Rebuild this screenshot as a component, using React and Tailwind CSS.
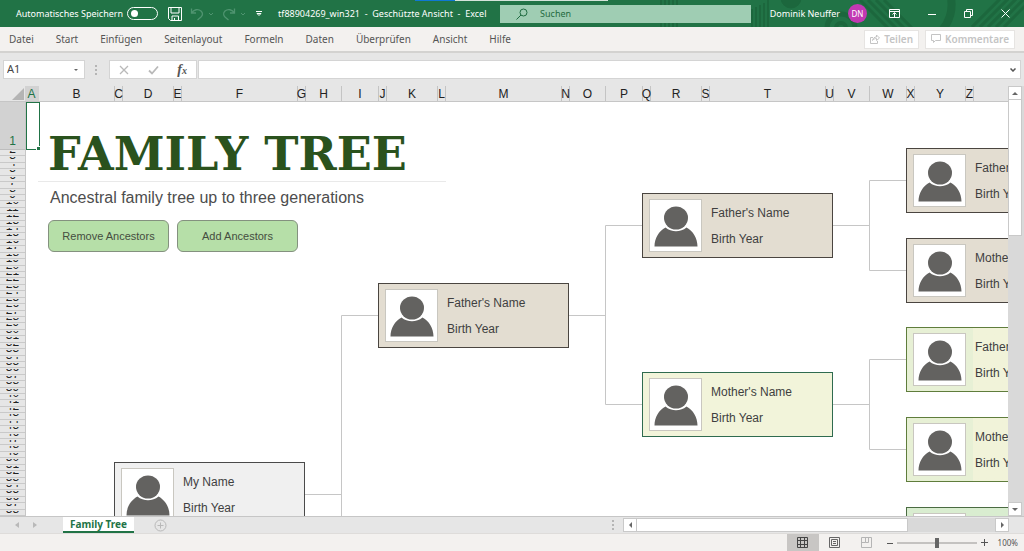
import React, { useState } from "react";

const columns = [
	{ name: "A", width: 14 },
	{ name: "B", width: 76 },
	{ name: "C", width: 8 },
	{ name: "D", width: 51 },
	{ name: "E", width: 8 },
	{ name: "F", width: 116 },
	{ name: "G", width: 8 },
	{ name: "H", width: 36 },
	{ name: "I", width: 37 },
	{ name: "J", width: 8 },
	{ name: "K", width: 51 },
	{ name: "L", width: 8 },
	{ name: "M", width: 116 },
	{ name: "N", width: 8 },
	{ name: "O", width: 36 },
	{ name: "P", width: 37 },
	{ name: "Q", width: 8 },
	{ name: "R", width: 51 },
	{ name: "S", width: 8 },
	{ name: "T", width: 116 },
	{ name: "U", width: 8 },
	{ name: "V", width: 36 },
	{ name: "W", width: 37 },
	{ name: "X", width: 8 },
	{ name: "Y", width: 51 },
	{ name: "Z", width: 8 },
];

// Zeilen 2 bis 58, Zeile 1 ist höher und wird extra gezeichnet
const rows = Array.from({ length: 57 }, (_, i) => i + 2);

const tabs = [
	"Datei",
	"Start",
	"Einfügen",
	"Seitenlayout",
	"Formeln",
	"Daten",
	"Überprüfen",
	"Ansicht",
	"Hilfe",
];

const people = [
	{ name: "My Name", x: 88, y: 360, color: "bg-[#f0f0f0] border-[#4a4a4a]" },
	{ name: "Father's Name", x: 352, y: 181, color: "bg-[#e3ddd1] border-[#4a4540]" },
	{ name: "Father's Name", x: 616, y: 91, color: "bg-[#e3ddd1] border-[#4a4540]" },
	{ name: "Mother's Name", x: 616, y: 270, color: "bg-[#f2f4da] border-[#2f6b4f]" },
	{ name: "Father's Name", x: 880, y: 46, color: "bg-[#e3ddd1] border-[#4a4540]" },
	{ name: "Mother's Name", x: 880, y: 136, color: "bg-[#e3ddd1] border-[#4a4540]" },
	{
		name: "Father's Name",
		x: 880,
		y: 225,
		color: "bg-linear-to-r from-[#e7f0d5] from-35% to-[#f1f3d9] to-35% border-[#5f7d3c]",
	},
	{
		name: "Mother's Name",
		x: 880,
		y: 315,
		color: "bg-linear-to-r from-[#e7f0d5] from-35% to-[#f1f3d9] to-35% border-[#5f7d3c]",
	},
	{ name: "Father's Name", x: 880, y: 405, color: "bg-[#d9edd0] border-[#4a6b41]" },
];

const Avatar = () => (
	<span className="flex size-[53px] shrink-0 items-center justify-center border border-[#c9c7c0] bg-white">
		<svg viewBox="0 0 44 44" className="size-11" fill="#636260">
			<ellipse cx="22" cy="14" rx="12" ry="11.500" />
			<path d="M.500 42.500C.500 34 5 27 11.500 23.500C17.500 28.500 26.500 28.500 32.500 23.500C39 27 43.500 34 43.500 42.500Z" />
		</svg>
	</span>
);

const PersonCard = ({ person }) => (
	<div
		className={`absolute flex w-[191px] gap-[9px] border px-1.5 py-[5px] text-xs text-[#3f3f3f] ${person.color}`}
		style={{ left: person.x, top: person.y }}
	>
		<Avatar />
		<div className="pt-px leading-[26px] whitespace-nowrap">
			<p>{person.name}</p>
			<p>Birth Year</p>
		</div>
	</div>
);

const Dots = () => (
	<span className="flex flex-col gap-0.5">
		<span className="size-0.5 bg-[#b5b5b5]" />
		<span className="size-0.5 bg-[#b5b5b5]" />
		<span className="size-0.5 bg-[#b5b5b5]" />
	</span>
);

const Chevron = ({ className }) => (
	<svg viewBox="0 0 6 4" className={className} fill="none" stroke="currentColor">
		<path d="M1 1L3 3L5 1" />
	</svg>
);

const TitlePattern = () => (
	<svg
		className="absolute top-0 right-0 h-[27px] w-[364px]"
		viewBox="0 0 364 27"
		fill="none"
		stroke="#1c673d"
	>
		<path strokeWidth="2" d="M1 0V27M5 0V27M9 0V27M13 0V27M17 0V27M92 9V27M96 7V27M100 5V27M104 3V27M108 0V27" />
		<circle cx="131" cy="-2" r="10" fill="#1c673d" />
		<circle cx="181" cy="28" r="14" strokeWidth="5" />
		<circle cx="181" cy="28" r="5" strokeWidth="4" />
		<path strokeWidth="3" d="M200 0L228 28M208 0L236 28M216 0L244 28M224 0L252 28" />
		<path strokeWidth="8" d="M291 -2C293 10 290 20 283 29" />
		<path strokeWidth="3" d="M312 27L340 -1M320 27L348 -1M328 27L356 -1M336 27L364 -1M344 27L372 -1" />
	</svg>
);

const TitleBar = () => {
	const [autoSave, setAutoSave] = useState(false);

	return (
		<header className="relative flex h-[27px] shrink-0 items-center bg-[#217346] text-[9px] whitespace-nowrap text-white">
			<TitlePattern />
			<div className="absolute top-0 left-[415px] flex h-px">
				<span className="w-10 bg-[#0f78d4]" />
				<span className="w-[153px] bg-[#d5e3da]" />
			</div>
			<label className="ml-4 flex items-center gap-1">
				Automatisches Speichern
				<input
					type="checkbox"
					role="switch"
					checked={autoSave}
					onChange={(e) => setAutoSave(e.target.checked)}
					className="h-[13px] w-[31px] appearance-none rounded-full border border-white before:mt-[2px] before:ml-[3px] before:block before:size-[7px] before:rounded-full before:bg-white checked:before:ml-[19px]"
				/>
			</label>
			<button type="button" aria-label="Speichern" className="ml-2.5">
				<svg viewBox="0 0 14 14" className="size-3.5" fill="none" stroke="#fff">
					<path d="M.500 .500H13.500V13.500H2.500L.500 11.500Z" />
					<path d="M3 .500V6H11V.500M4 13.500V9H10.500V13.500M6.500 11V13.500" />
				</svg>
			</button>
			<div className="ml-2 flex items-center gap-1 text-[#4f9470]">
				<button type="button" aria-label="Rückgängig">
					<svg viewBox="0 0 14 14" className="size-3.5" fill="none" stroke="currentColor" strokeWidth="1.300">
						<path d="M1.500 1.500V6H6M1.500 6C4 2.500 8 1.500 11 4C13 6 12.500 8.500 11 10L7.500 13" />
					</svg>
				</button>
				<Chevron className="h-1 w-1.5" />
				<button type="button" aria-label="Wiederholen" className="ml-1">
					<svg viewBox="0 0 14 14" className="size-3.5" fill="none" stroke="currentColor" strokeWidth="1.300">
						<path d="M12.500 1.500V6H8M12.500 6C10 2.500 6 1.500 3 4C1 6 1.500 8.500 3 10L6.500 13" />
					</svg>
				</button>
				<Chevron className="h-1 w-1.5" />
			</div>
			<button type="button" aria-label="Symbolleiste anpassen" className="ml-2.5">
				<svg viewBox="0 0 6 6" className="size-1.5" fill="none" stroke="#fff">
					<path d="M0 .500H6M1 2.500H5L3 4.500Z" />
				</svg>
			</button>
			<h1 className="ml-4 w-[222px] whitespace-pre">
				tf88904269_win321{"  "}-{"  "}Geschützte Ansicht{"  "}-{"  "}Excel
			</h1>
			<label className="relative flex h-[18px] w-[251px] items-center gap-3 bg-[#9fcdb3] px-4 text-[#1f6b41]">
				<svg viewBox="0 0 12 12" className="size-3" fill="none" stroke="currentColor">
					<circle cx="7.500" cy="4.500" r="3.500" />
					<path d="M5 7L.500 11.500" />
				</svg>
				<input
					type="search"
					aria-label="Suchen"
					placeholder="Suchen"
					className="min-w-0 flex-1 bg-transparent outline-none placeholder:text-[#1f6b41]"
				/>
			</label>
			<div className="relative ml-auto flex items-center">
				<span>Dominik Neuffer</span>
				<span className="ml-2 flex size-[19px] items-center justify-center rounded-full bg-[#c239b3] text-[8px]">
					DN
				</span>
				<button type="button" aria-label="Menüband anzeigen" className="ml-[22px]">
					<svg viewBox="0 0 11 9" className="h-[9px] w-[11px]" fill="none" stroke="#fff">
						<path d="M.500 .500H10.500V8.500H.500ZM.500 2.500H10.500M5.500 8V4M3.500 5.500L5.500 3.500L7.500 5.500" />
					</svg>
				</button>
				<button type="button" aria-label="Minimieren" className="ml-7">
					<svg viewBox="0 0 8 8" className="size-2" stroke="#fff">
						<path d="M0 4.500H8" />
					</svg>
				</button>
				<button type="button" aria-label="Wiederherstellen" className="ml-7">
					<svg viewBox="0 0 9 9" className="size-[9px]" fill="none" stroke="#fff">
						<path d="M.500 2.500H6.500V8.500H.500ZM2.500 2.500V.500H8.500V6.500H6.500" />
					</svg>
				</button>
				<button type="button" aria-label="Schließen" className="mr-3.5 ml-7">
					<svg viewBox="0 0 9 9" className="size-[9px]" stroke="#fff">
						<path d="M.500 .500L8.500 8.500M8.500 .500L.500 8.500" />
					</svg>
				</button>
			</div>
		</header>
	);
};

const Ribbon = () => (
	<nav className="flex h-6 shrink-0 items-center justify-between bg-[#f3f1ef] pr-[9px] pl-[9px] text-[10px] text-[#555]">
		<div className="flex gap-[22px]">
			{tabs.map((tab) => (
				<a key={tab} href={`#${tab}`}>
					{tab}
				</a>
			))}
		</div>
		<div className="flex gap-1.5 font-semibold text-[#c4c4c4]">
			<button type="button" className="flex h-[19px] items-center gap-1 border border-[#e6e4e2] bg-white px-[5px]">
				<svg viewBox="0 0 10 10" className="size-2.5" fill="none" stroke="currentColor">
					<path d="M3 3.500H.500V9.500H7.500V7M2.500 6.500C3 4 4.500 3 6.500 3V1L9.500 4L6.500 6.500V4.500C5 4.500 3.500 5 2.500 6.500Z" />
				</svg>
				Teilen
			</button>
			<button type="button" className="flex h-[19px] items-center gap-1 border border-[#e6e4e2] bg-white px-[5px]">
				<svg viewBox="0 0 10 10" className="size-2.5" fill="none" stroke="currentColor">
					<path d="M.500 .500H9.500V6.500H4.500L2.500 8.500V6.500H.500Z" />
				</svg>
				Kommentare
			</button>
		</div>
	</nav>
);

const FormulaBar = () => {
	const [formula, setFormula] = useState("");

	return (
		<div className="flex h-[35px] shrink-0 items-center border-t-2 border-[#d3d2d0] pr-[3px] pl-[3px]">
			<label className="flex h-[19px] w-[82px] items-center border border-[#d4d4d4] bg-white pr-1.5 pl-[3px] text-[#444]">
				<input
					aria-label="Namenfeld"
					defaultValue="A1"
					className="min-w-0 flex-1 text-[11px] outline-none"
				/>
				<svg viewBox="0 0 4 2" className="h-0.5 w-1" fill="#666">
					<path d="M0 0H4L2 2Z" />
				</svg>
			</label>
			<span className="ml-2.5">
				<Dots />
			</span>
			<div className="ml-3 flex h-[19px] w-[88px] items-center justify-between border border-[#d4d4d4] bg-white px-[9px] text-[#b9b9b9]">
				<button type="button" aria-label="Abbrechen">
					<svg viewBox="0 0 10 10" className="size-2.5" stroke="currentColor" strokeWidth="1.300">
						<path d="M1 1L9 9M9 1L1 9" />
					</svg>
				</button>
				<button type="button" aria-label="Eingeben">
					<svg viewBox="0 0 11 10" className="h-2.5 w-[11px]" fill="none" stroke="currentColor" strokeWidth="1.800">
						<path d="M1 5.500L4 8.500L10 1.500" />
					</svg>
				</button>
				<button
					type="button"
					aria-label="Funktion einfügen"
					className="font-['Liberation_Serif',serif] text-[14px] leading-none font-bold text-[#555] italic"
				>
					f<span className="text-[10px]">x</span>
				</button>
			</div>
			<label className="ml-px flex h-[19px] min-w-0 flex-1 items-center border border-[#d4d4d4] bg-white pr-1 pl-1">
				<input
					aria-label="Bearbeitungsleiste"
					value={formula}
					onChange={(e) => setFormula(e.target.value)}
					className="min-w-0 flex-1 text-[11px] outline-none"
				/>
				<svg viewBox="0 0 6 4" className="h-1 w-1.5" fill="none" stroke="#555" strokeWidth="1.500">
					<path d="M.500 .500L3 3L5.500 .500" />
				</svg>
			</label>
		</div>
	);
};

const ColumnHeaders = () => (
	<div className="flex h-4 shrink-0 overflow-hidden border-b border-[#c6c6c6] font-['Liberation_Sans',sans-serif] text-xs text-[#222]">
		<div className="flex w-[25px] shrink-0 items-end justify-end pr-px pb-px">
			<svg viewBox="0 0 12 12" className="size-3" fill="#b4b4b4">
				<path d="M12 0V12H0Z" />
			</svg>
		</div>
		{columns.map(({ name, width }) => (
			<div
				key={name}
				style={{ width }}
				className={`flex shrink-0 items-center justify-center border-r leading-4 ${
					name === "A" ? "border-[#d2d2d2] bg-[#d2d2d2] text-[#217346]" : "border-[#c4c4c4]"
				}`}
			>
				{name}
			</div>
		))}
	</div>
);

const RowHeaders = () => (
	<div className="flex w-[26px] shrink-0 flex-col overflow-hidden border-r border-[#c6c6c6] font-['Liberation_Sans',sans-serif] text-xs text-[#222]">
		<div className="flex h-12 shrink-0 items-end justify-center border-b border-[#bdbdbd] bg-[#d2d2d2] leading-4 text-[#217346]">
			1
		</div>
		{rows.map((row) => (
			<div
				key={row}
				className="flex min-h-0 flex-1 items-start justify-center overflow-hidden border-b border-[#c9c9c9] pt-px"
			>
				{/* von den Ziffern bleibt nur der untere Rand sichtbar */}
				<span className="flex h-0.5 items-end overflow-hidden leading-[8px]">{row}</span>
			</div>
		))}
	</div>
);

const Sheet = () => (
	<main className="relative min-w-0 flex-1 overflow-hidden bg-white font-['Liberation_Sans',sans-serif]">
		<div className="absolute top-0 left-0 h-12 w-3.5 border border-[#217346]" />
		<div className="absolute top-[45px] left-[11px] size-[3px] bg-[#217346] outline outline-white" />

		<svg className="absolute top-0 left-0 h-[480px] w-[1000px]" viewBox="0 0 1000 480" fill="none" stroke="#c6c6c6">
			<path d="M279 392.500H315.500M352 213.500H315.500V480" />
			<path d="M543 213.500H579.500M616 123.500H579.500V302.500H616" />
			<path d="M807 123.500H843.500M880 78.500H843.500V168.500H880" />
			<path d="M807 302.500H843.500M880 257.500H843.500V347.500H880" />
		</svg>

		{people.map((person) => (
			<PersonCard key={`${person.x}-${person.y}`} person={person} />
		))}

		<div className="w-[420px] pt-[26px] pl-[22px]">
			<h2 className="font-['DejaVu_Serif',serif] text-[46px] leading-[53px] font-bold whitespace-nowrap text-[#2a521d]">
				FAMILY TREE
			</h2>
			<hr className="-ml-2.5 border-[#e9e9e9]" />
			<p className="mt-1 ml-0.5 text-base whitespace-nowrap text-[#4d4d4d]">
				Ancestral family tree up to three generations
			</p>
			<div className="mt-2.5 flex gap-2 text-[11px] text-[#454d40]">
				<button type="button" className="h-8 w-[121px] rounded-md border border-[#84917f] bg-[#b6dfa8]">
					Remove Ancestors
				</button>
				<button type="button" className="h-8 w-[121px] rounded-md border border-[#84917f] bg-[#b6dfa8]">
					Add Ancestors
				</button>
			</div>
		</div>
	</main>
);

const ScrollButton = ({ label, d }) => (
	<button
		type="button"
		aria-label={label}
		className="flex size-3.5 shrink-0 items-center justify-center border border-[#c9c9c9] bg-white"
	>
		<svg viewBox="0 0 6 6" className="size-1.5" fill="#666">
			<path d={d} />
		</svg>
	</button>
);

const SheetTabs = () => (
	<div className="flex h-[17px] shrink-0 items-center border-t border-[#c6c6c6] bg-[#e6e6e6]">
		<div className="flex w-[63px] gap-[14px] pl-[15px]">
			<button type="button" aria-label="Vorheriges Blatt">
				<svg viewBox="0 0 4 6" className="h-1.5 w-1" fill="#b9b9b9">
					<path d="M4 0V6L0 3Z" />
				</svg>
			</button>
			<button type="button" aria-label="Nächstes Blatt">
				<svg viewBox="0 0 4 6" className="h-1.5 w-1" fill="#b9b9b9">
					<path d="M0 0V6L4 3Z" />
				</svg>
			</button>
		</div>
		<button
			type="button"
			className="-mt-px h-4 border-b-2 border-[#217346] bg-white px-[7px] text-[10px] leading-3 font-bold text-[#217346]"
		>
			Family Tree
		</button>
		<button type="button" aria-label="Neues Blatt" className="ml-5">
			<svg viewBox="0 0 13 13" className="size-[13px]" fill="none" stroke="#b9b9b9">
				<circle cx="6.500" cy="6.500" r="5.500" />
				<path d="M3.500 6.500H9.500M6.500 3.500V9.500" />
			</svg>
		</button>
		<div className="ml-auto flex items-center">
			<Dots />
			<div className="ml-[9px] flex w-[386px] bg-[#d9d9d9]">
				<ScrollButton label="Nach links" d="M5 0V6L2 3Z" />
				<span className="w-[271px] border-y border-r border-[#c9c9c9] bg-white" />
				<span className="flex-1" />
				<ScrollButton label="Nach rechts" d="M2 0V6L5 3Z" />
			</div>
			<span className="w-[15px]" />
		</div>
	</div>
);

const StatusBar = () => {
	const [zoom, setZoom] = useState(100);

	return (
		<footer className="flex h-[18px] shrink-0 items-center justify-end border-t border-[#dedcda] bg-[#f3f1ef] pr-1.5 text-[#555]">
			<button type="button" aria-label="Normal" className="flex h-full w-8 items-center justify-center bg-[#c8c6c4]">
				<svg viewBox="0 0 11 11" className="size-[11px]" fill="none" stroke="#444">
					<path d="M.500 .500H10.500V10.500H.500ZM.500 3.500H10.500M.500 7.500H10.500M3.500 .500V10.500M7.500 .500V10.500" />
				</svg>
			</button>
			<button type="button" aria-label="Seitenlayout" className="flex w-8 justify-center">
				<svg viewBox="0 0 11 11" className="size-[11px]" fill="none" stroke="#666">
					<path d="M.500 .500H10.500V10.500H.500ZM2.500 2.500H8.500V8.500H2.500ZM4 4.500H7M4 6.500H7" />
				</svg>
			</button>
			<button type="button" aria-label="Umbruchvorschau" className="flex w-8 justify-center">
				<svg viewBox="0 0 11 11" className="size-[11px]" fill="none" stroke="#b5b5b5">
					<path d="M.500 .500H10.500V10.500H.500ZM4.500 .500V5.500H.500M7.500 .500V5.500H4.500" />
				</svg>
			</button>
			<button type="button" aria-label="Verkleinern" className="ml-1">
				<svg viewBox="0 0 6 6" className="size-1.5" stroke="currentColor">
					<path d="M0 3.500H6" />
				</svg>
			</button>
			<input
				type="range"
				aria-label="Zoom"
				min="0"
				max="200"
				value={zoom}
				onChange={(e) => setZoom(Number(e.target.value))}
				className="mx-1 h-2.5 w-20 appearance-none bg-transparent [&::-webkit-slider-runnable-track]:h-0.5 [&::-webkit-slider-runnable-track]:bg-[#c4c2c0] [&::-webkit-slider-thumb]:-mt-1 [&::-webkit-slider-thumb]:h-2.5 [&::-webkit-slider-thumb]:w-1 [&::-webkit-slider-thumb]:appearance-none [&::-webkit-slider-thumb]:bg-[#666]"
			/>
			<button type="button" aria-label="Vergrößern">
				<svg viewBox="0 0 7 7" className="size-[7px]" stroke="currentColor">
					<path d="M0 3.500H7M3.500 0V7" />
				</svg>
			</button>
			<span className="ml-2.5 text-[8px]">100%</span>
		</footer>
	);
};

const App = () => (
	<div className="flex h-screen flex-col overflow-hidden bg-[#e6e6e6] font-['Noto_Sans',sans-serif]">
		<TitleBar />
		<Ribbon />
		<FormulaBar />
		<div className="flex min-h-0 flex-1">
			<div className="flex min-w-0 flex-1 flex-col">
				<ColumnHeaders />
				<div className="flex min-h-0 flex-1">
					<RowHeaders />
					<Sheet />
				</div>
			</div>
			<div className="flex w-4 shrink-0 flex-col items-start bg-[#d9d9d9] pr-0.5">
				<ScrollButton label="Nach oben" d="M0 5H6L3 2Z" />
				<span className="h-[136px] w-full border border-t-0 border-[#c9c9c9] bg-white" />
				<span className="flex-1" />
				<ScrollButton label="Nach unten" d="M0 2H6L3 5Z" />
			</div>
		</div>
		<SheetTabs />
		<StatusBar />
	</div>
);

export default App;
